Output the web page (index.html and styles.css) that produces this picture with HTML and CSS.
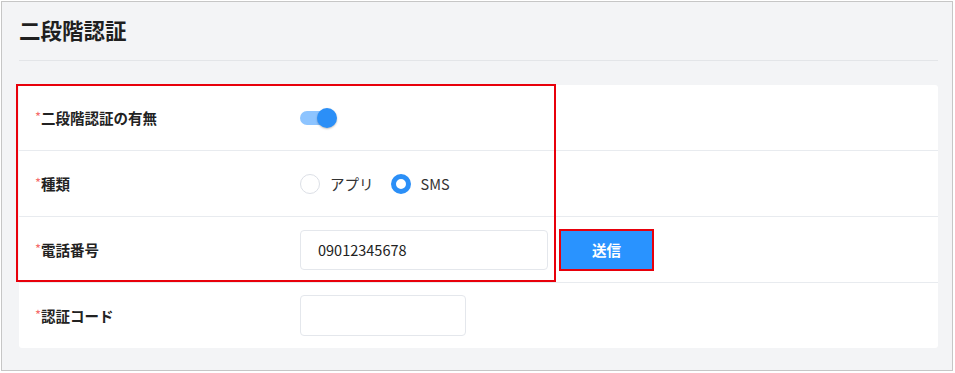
FILE: index.html
```html
<!DOCTYPE html>
<html lang="ja">
<head>
    <meta charset="UTF-8">
    <meta name="viewport" content="width=device-width, initial-scale=1.0">
    <title>二段階認証</title>
    <link rel="stylesheet" href="styles.css">
</head>
<body>
    <div class="frame">
        <div class="page-header">
            <h1 class="page-title">二段階認証</h1>
        </div>

        <div class="card">
            <div class="form-row">
                <div class="form-label"><span class="required">*</span>二段階認証の有無</div>
                <div class="form-control">
                    <span class="switch">
                        <span class="switch-track"></span>
                        <span class="switch-knob"></span>
                    </span>
                </div>
            </div>

            <div class="form-row">
                <div class="form-label"><span class="required">*</span>種類</div>
                <div class="form-control">
                    <label class="radio">
                        <span class="radio-dot"></span>
                        <span class="radio-text">アプリ</span>
                    </label>
                    <label class="radio checked">
                        <span class="radio-dot"></span>
                        <span class="radio-text">SMS</span>
                    </label>
                </div>
            </div>

            <div class="form-row">
                <div class="form-label"><span class="required">*</span>電話番号</div>
                <div class="form-control">
                    <input type="text" class="text-input phone-input" value="09012345678">
                    <button type="button" class="send-btn">送信</button>
                </div>
            </div>

            <div class="form-row">
                <div class="form-label"><span class="required">*</span>認証コード</div>
                <div class="form-control">
                    <input type="text" class="text-input code-input">
                </div>
            </div>

            <!-- annotation box over the first three rows -->
            <div class="highlight"></div>
        </div>
    </div>
</body>
</html>
```

FILE: styles.css
```css
* {
    box-sizing: border-box;
}
body {
    margin: 1px;
    font-family: "Noto Sans CJK JP", "Noto Sans", sans-serif;
    color: #222;
    background: #fff;
}
.frame {
    width: 952px;
    height: 370px;
    border: 1px solid #c6c6c6;
    background: #f3f4f6;
    padding: 0 14px 0 17px;
}
.page-header {
    padding: 14px 0 16px;
    border-bottom: 1px solid #e3e5e8;
}
.page-title {
    margin: 0;
    font-size: 21.5px;
    line-height: 28px;
    font-weight: bold;
    color: #1f1f1f;
}
.card {
    position: relative;
    margin-top: 24px;
    background: #fff;
    border-radius: 3px;
}
.highlight {
    position: absolute;
    left: -3px;
    top: -1px;
    width: 540px;
    height: 198px;
    border: 2px solid #e8000b;
    pointer-events: none;
}
.form-row {
    display: flex;
    align-items: center;
    height: 66px;
    padding-left: 16px;
    border-top: 1px solid #e8ebef;
}
.form-row:first-child {
    border-top: none;
    height: 65px;
}
.form-label {
    width: 265px;
    font-size: 14.5px;
    font-weight: bold;
    color: #222;
}
.required {
    color: #f56c6c;
    font-size: 13px;
    font-weight: normal;
    vertical-align: 2px;
}
.form-control {
    display: flex;
    align-items: center;
}
.switch {
    position: relative;
    display: inline-block;
    width: 38px;
    height: 22px;
}
.switch-track {
    position: absolute;
    left: 0;
    top: 4px;
    width: 32px;
    height: 14px;
    border-radius: 7px;
    background: #8dc4ff;
}
.switch-knob {
    position: absolute;
    left: 17px;
    top: 1px;
    width: 20px;
    height: 20px;
    border-radius: 50%;
    background: #2b8ff7;
    box-shadow: 0 1px 2px rgba(0,0,0,0.25);
}
.radio {
    display: flex;
    align-items: center;
    margin-right: 17px;
    font-size: 14.5px;
    color: #333;
}
.radio-dot {
    width: 20px;
    height: 20px;
    border-radius: 50%;
    border: 1px solid #dcdfe6;
    background: #fff;
    margin-right: 10px;
}
.radio.checked .radio-dot {
    border: 5px solid #2b8ff7;
}
.text-input {
    height: 40px;
    border: 1px solid #e4e7ec;
    border-radius: 4px;
    padding: 0 17px;
    font-family: "Noto Sans CJK JP", "Noto Sans", sans-serif;
    font-size: 14.5px;
    color: #222;
    background: #fff;
    outline: none;
}
.phone-input {
    width: 248px;
}
.code-input {
    width: 166px;
    height: 41px;
}
.send-btn {
    margin-left: 11px;
    width: 95px;
    height: 42px;
    border: 2px solid #e8000b;
    background: #2993ff;
    color: #fff;
    font-family: "Noto Sans CJK JP", "Noto Sans", sans-serif;
    font-size: 14.5px;
    font-weight: bold;
    cursor: pointer;
}
```
